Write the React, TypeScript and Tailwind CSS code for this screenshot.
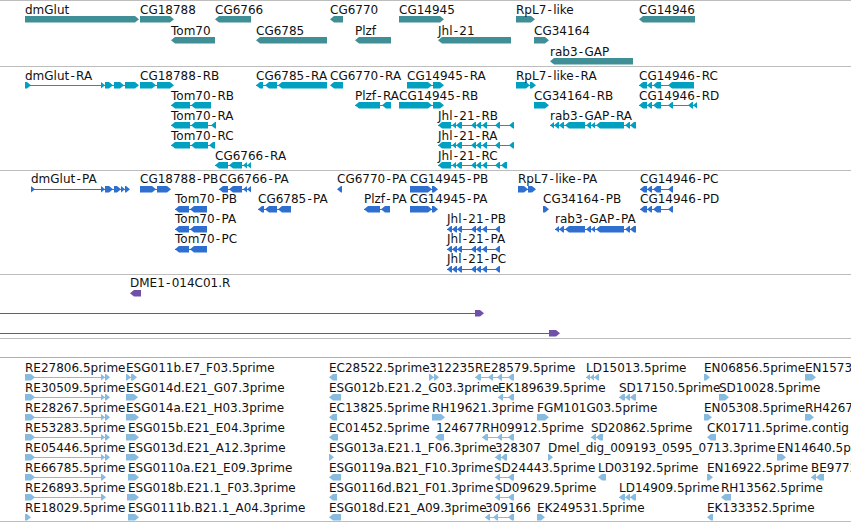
import React from "react";

type Ex = [number, number];
type F = { n: string; x: number; c: number; d: "L" | "R"; e: Ex[] };

const f = (n: string, x: number, c: number, d: "L" | "R", ...e: Ex[]): F => ({ n, x, c, d, e });

const A: F[] = [
  f("dmGlut", 25, 19, "R", [25, 139]),
  f("CG18788", 140, 19, "R", [140, 174]),
  f("CG6766", 215, 19, "L", [215, 251]),
  f("CG6770", 330, 19, "L", [330, 343]),
  f("CG14945", 399, 19, "R", [399, 444]),
  f("RpL7-like", 516, 19, "R", [516, 535]),
  f("CG14946", 639, 19, "L", [639, 695]),
  f("Tom70", 171, 40, "L", [171, 215]),
  f("CG6785", 256, 40, "L", [256, 327]),
  f("Plzf", 355, 40, "L", [355, 391]),
  f("Jhl-21", 438, 40, "L", [438, 511]),
  f("CG34164", 534, 40, "R", [534, 549]),
  f("rab3-GAP", 550, 61, "L", [550, 633]),
];

const jhlR: Ex[] = [[438, 451], [452, 456], [456, 462], [471, 476], [476, 481], [482, 487], [495, 500], [509, 514]];
const jhlP: Ex[] = [[447, 452], [452, 457], [457, 462], [471, 476], [476, 481], [482, 487], [495, 500]];
const rab: Ex[] = [[554, 559], [559, 564], [565, 585], [586, 591], [591, 595], [596, 624], [625, 630], [630, 636]];

const B: F[] = [
  f("dmGlut-RA", 25, 85, "R", [25, 31], [101, 105], [105, 113], [114, 124], [125, 139]),
  f("CG18788-RB", 140, 85, "R", [140, 156], [157, 174]),
  f("CG6785-RA", 256, 85, "L", [256, 263], [265, 277], [278, 327]),
  f("CG6770-RA", 330, 85, "L", [330, 343]),
  f("CG14945-RA", 407, 85, "R", [407, 432], [433, 444]),
  f("RpL7-like-RA", 516, 85, "R", [516, 530], [530, 536]),
  f("CG14946-RC", 639, 85, "L", [639, 647], [647, 652], [653, 661], [668, 694]),
  f("Tom70-RB", 171, 105, "L", [171, 190], [191, 211]),
  f("Plzf-RA", 355, 105, "L", [355, 380], [382, 391]),
  f("CG14945-RB", 399, 105, "R", [399, 432], [433, 444]),
  f("CG34164-RB", 534, 105, "R", [534, 549]),
  f("CG14946-RD", 639, 105, "L", [639, 647], [647, 652], [653, 661], [668, 673], [688, 693], [693, 697]),
  f("Tom70-RA", 171, 125, "L", [171, 190], [191, 208], [211, 216]),
  f("Jhl-21-RB", 438, 125, "L", ...jhlR),
  f("rab3-GAP-RA", 550, 125, "L", [550, 554], ...rab),
  f("Tom70-RC", 171, 145, "L", [171, 190], [191, 208], [209, 215]),
  f("Jhl-21-RA", 438, 145, "L", ...jhlR),
  f("CG6766-RA", 215, 165, "L", [215, 228], [229, 242], [243, 247], [247, 251]),
  f("Jhl-21-RC", 438, 165, "L", ...jhlR.slice(0, 7), [501, 507]),
];

const C: F[] = [
  f("dmGlut-PA", 31, 189, "R", [31, 35], [101, 105], [105, 113], [114, 121], [121, 125], [125, 130]),
  f("CG18788-PB", 140, 189, "R", [140, 156], [157, 171]),
  f("CG6766-PA", 219, 189, "L", [219, 228], [229, 242], [243, 247], [247, 251]),
  f("CG6770-PA", 337, 189, "L", [337, 342]),
  f("CG14945-PB", 410, 189, "R", [410, 432], [432, 438]),
  f("RpL7-like-PA", 518, 189, "R", [518, 528], [528, 536]),
  f("CG14946-PC", 640, 189, "L", [640, 647], [647, 652], [653, 661], [668, 673]),
  f("Tom70-PB", 175, 209, "L", [175, 189], [190, 207]),
  f("CG6785-PA", 258, 209, "L", [258, 264], [265, 277], [278, 291]),
  f("Plzf-PA", 364, 209, "L", [364, 380], [381, 390]),
  f("CG14945-PA", 410, 209, "R", [410, 432], [432, 438]),
  f("CG34164-PB", 543, 209, "R", [543, 549]),
  f("CG14946-PD", 640, 209, "L", [640, 647], [647, 652], [653, 661], [668, 673]),
  f("Tom70-PA", 175, 229, "L", [175, 189], [190, 207]),
  f("Jhl-21-PB", 447, 229, "L", ...jhlP),
  f("rab3-GAP-PA", 555, 229, "L", [555, 559], [559, 564], ...rab.slice(2)),
  f("Tom70-PC", 175, 249, "L", [175, 189], [190, 207]),
  f("Jhl-21-PA", 447, 249, "L", ...jhlP),
  f("Jhl-21-PC", 447, 269, "L", ...jhlP),
];

const D: F[] = [
  f("DME1-014C01.R", 130, 293, "L", [130, 141]),
  f("", 0, 313, "R", [-5, -4], [475, 484]),
  f("", 0, 333, "R", [-5, -4], [549, 560]),
];

const re2: Ex[] = [[25, 35], [101, 105], [105, 110]];
const re1: Ex[] = [[25, 35], [101, 106]];
const tri: Ex[] = [[619, 625], [625, 630], [630, 636]];
const c5 = (i: number) => 377 + 20 * i;

const E: F[] = [
  f("RE27806.5prime", 25, c5(0), "R", ...re2),
  f("ESG011b.E7_F03.5prime", 126, c5(0), "R", [126, 131], [131, 137]),
  f("EC28522.5prime", 329, c5(0), "L", [329, 337]),
  f("312235", 429, c5(0), "R", [429, 434], [434, 439]),
  f("RE28579.5prime", 475, c5(0), "L", [475, 481], [488, 493], [497, 502], [508, 514]),
  f("LD15013.5prime", 586, c5(0), "L", [586, 590], [590, 594], [594, 599]),
  f("EN06856.5prime", 704, c5(0), "R", [704, 710]),
  f("EN1573", 805, c5(0), "R", [805, 816]),

  f("RE30509.5prime", 25, c5(1), "R", ...re2),
  f("ESG014d.E21_G07.3prime", 126, c5(1), "R", [126, 138]),
  f("ESG012b.E21.2_G03.3prime", 329, c5(1), "L", [329, 341]),
  f("EK189639.5prime", 498, c5(1), "L", [498, 503], [508, 514]),
  f("SD17150.5prime", 619, c5(1), "L", ...tri),
  f("SD10028.5prime", 719, c5(1), "R", [719, 729]),

  f("RE28267.5prime", 25, c5(2), "R", ...re2),
  f("ESG014a.E21_H03.3prime", 126, c5(2), "R", [126, 139]),
  f("EC13825.5prime", 329, c5(2), "L", [329, 337]),
  f("RH19621.3prime", 432, c5(2), "R", [432, 445]),
  f("FGM101G03.5prime", 537, c5(2), "R", [537, 549]),
  f("EN05308.5prime", 704, c5(2), "R", [704, 712]),
  f("RH4267", 805, c5(2), "R", [805, 814]),

  f("RE53283.5prime", 25, c5(3), "R", ...re2),
  f("ESG015b.E21_E04.3prime", 128, c5(3), "R", [126, 139]),
  f("EC01452.5prime", 329, c5(3), "L", [329, 338]),
  f("124677", 436, c5(3), "L", [435, 444]),
  f("RH09912.5prime", 482, c5(3), "L", [482, 488], [497, 502], [508, 514]),
  f("SD20862.5prime", 591, c5(3), "L", [591, 596], [596, 603]),
  f("CK01711.5prime.contig", 707, c5(3), "L", [707, 716]),

  f("RE05446.5prime", 25, c5(4), "R", ...re2),
  f("ESG013d.E21_A12.3prime", 128, c5(4), "R", [126, 139]),
  f("ESG013a.E21.1_F06.3prime", 329, c5(4), "R", [329, 334]),
  f("328307", 495, c5(4), "L", [495, 501], [501, 507]),
  f("Dmel_dig_009193_0595_0713.3prime", 548, c5(4), "R", [548, 553]),
  f("EN14640.5p", 777, c5(4), "R", [777, 786]),

  f("RE66785.5prime", 25, c5(5), "R", ...re1),
  f("ESG0110a.E21_E09.3prime", 128, c5(5), "R", [128, 139]),
  f("ESG0119a.B21_F10.3prime", 329, c5(5), "L", [329, 341]),
  f("SD24443.5prime", 494, c5(5), "L", [495, 500], [508, 514]),
  f("LD03192.5prime", 598, c5(5), "L", [598, 606]),
  f("EN16922.5prime", 707, c5(5), "R", [707, 713]),
  f("BE9772", 811, c5(5), "L", [811, 816], [816, 824]),

  f("RE26893.5prime", 25, c5(6), "R", ...re1),
  f("ESG018b.E21.1_F03.3prime", 128, c5(6), "R", [127, 139]),
  f("ESG0116d.B21_F01.3prime", 329, c5(6), "L", [329, 337]),
  f("SD09629.5prime", 495, c5(6), "L", [495, 500], [508, 514]),
  f("LD14909.5prime", 619, c5(6), "L", ...tri),
  f("RH13562.5prime", 721, c5(6), "L", [721, 731]),

  f("RE18029.5prime", 25, c5(7), "R", [25, 31]),
  f("ESG0111b.B21.1_A04.3prime", 128, c5(7), "R", [128, 139]),
  f("ESG018d.E21_A09.3prime", 329, c5(7), "L", [329, 341]),
  f("309166", 485, c5(7), "L", [485, 490], [493, 498], [508, 514]),
  f("EK249531.5prime", 537, c5(7), "R", [537, 545]),
  f("EK133352.5prime", 707, c5(7), "L", [707, 713]),
];

function exonPts([a, b]: Ex, cy: number, d: "L" | "R") {
  const t = Math.min(4, b - a);
  const T = cy - 3;
  const B2 = cy + 3.5;
  const M = cy + 0.25;
  if (d === "R") return `${a},${T} ${b - t},${T} ${b},${M} ${b - t},${B2} ${a},${B2}`;
  return `${b},${T} ${a + t},${T} ${a},${M} ${a + t},${B2} ${b},${B2}`;
}

function Label({ text }: { text: string }) {
  const parts = text.split("-");
  return (
    <>
      {parts.map((p, i) => (
        <React.Fragment key={i}>
          {i > 0 && <span className="mx-[1.25px]">-</span>}
          {p}
        </React.Fragment>
      ))}
    </>
  );
}

function Track({ top, height, feats, color, labelGap, border }: {
  top: number; height: number; feats: F[]; color: string; labelGap: number; border: string;
}) {
  return (
    <div className={`relative w-full overflow-hidden border-t ${border}`} style={{ height }}>
      <svg width={851} height={height} viewBox={`0 ${top + 1} 851 ${height}`} className="absolute left-0 top-0 block">
        {feats.map((g, i) => (
          <g key={i} fill={color} stroke="none">
            {g.e.length > 1 && (
              <rect x={g.e[0][0]} y={g.c} width={g.e[g.e.length - 1][1] - g.e[0][0] - 1} height={1} />
            )}
            {g.e.map((x, j) => (
              <polygon key={j} points={exonPts(x, g.c, g.d)} />
            ))}
          </g>
        ))}
      </svg>
      {feats.filter((g) => g.n).map((g, i) => (
        <span
          key={i}
          className="absolute whitespace-nowrap text-[12px] leading-[14px] text-[#111]"
          style={{ left: g.x, top: g.c - labelGap - 7 - top }}
        >
          <Label text={g.n} />
        </span>
      ))}
    </div>
  );
}

export default function App() {
  return (
    <div className="h-[522px] w-[851px] overflow-hidden bg-white font-['DejaVu_Sans',sans-serif]">
      <Track top={0} height={66} feats={A} color="#408f96" labelGap={10} border="border-[#bdbdbd]" />
      <Track top={66} height={104} feats={B} color="#00a0c0" labelGap={10} border="border-[#bdbdbd]" />
      <Track top={170} height={104} feats={C} color="#2f6fd0" labelGap={11} border="border-[#bdbdbd]" />
      <Track top={274} height={64} feats={D} color="#7050a8" labelGap={11} border="border-[#bdbdbd]" />
      <div className="h-[19px] border-t border-[#bdbdbd]" />
      <Track top={357} height={164} feats={E} color="#88bbe0" labelGap={10} border="border-[#88bbe0]" />
      <div className="h-px bg-[#bdbdbd]" />
    </div>
  );
}
